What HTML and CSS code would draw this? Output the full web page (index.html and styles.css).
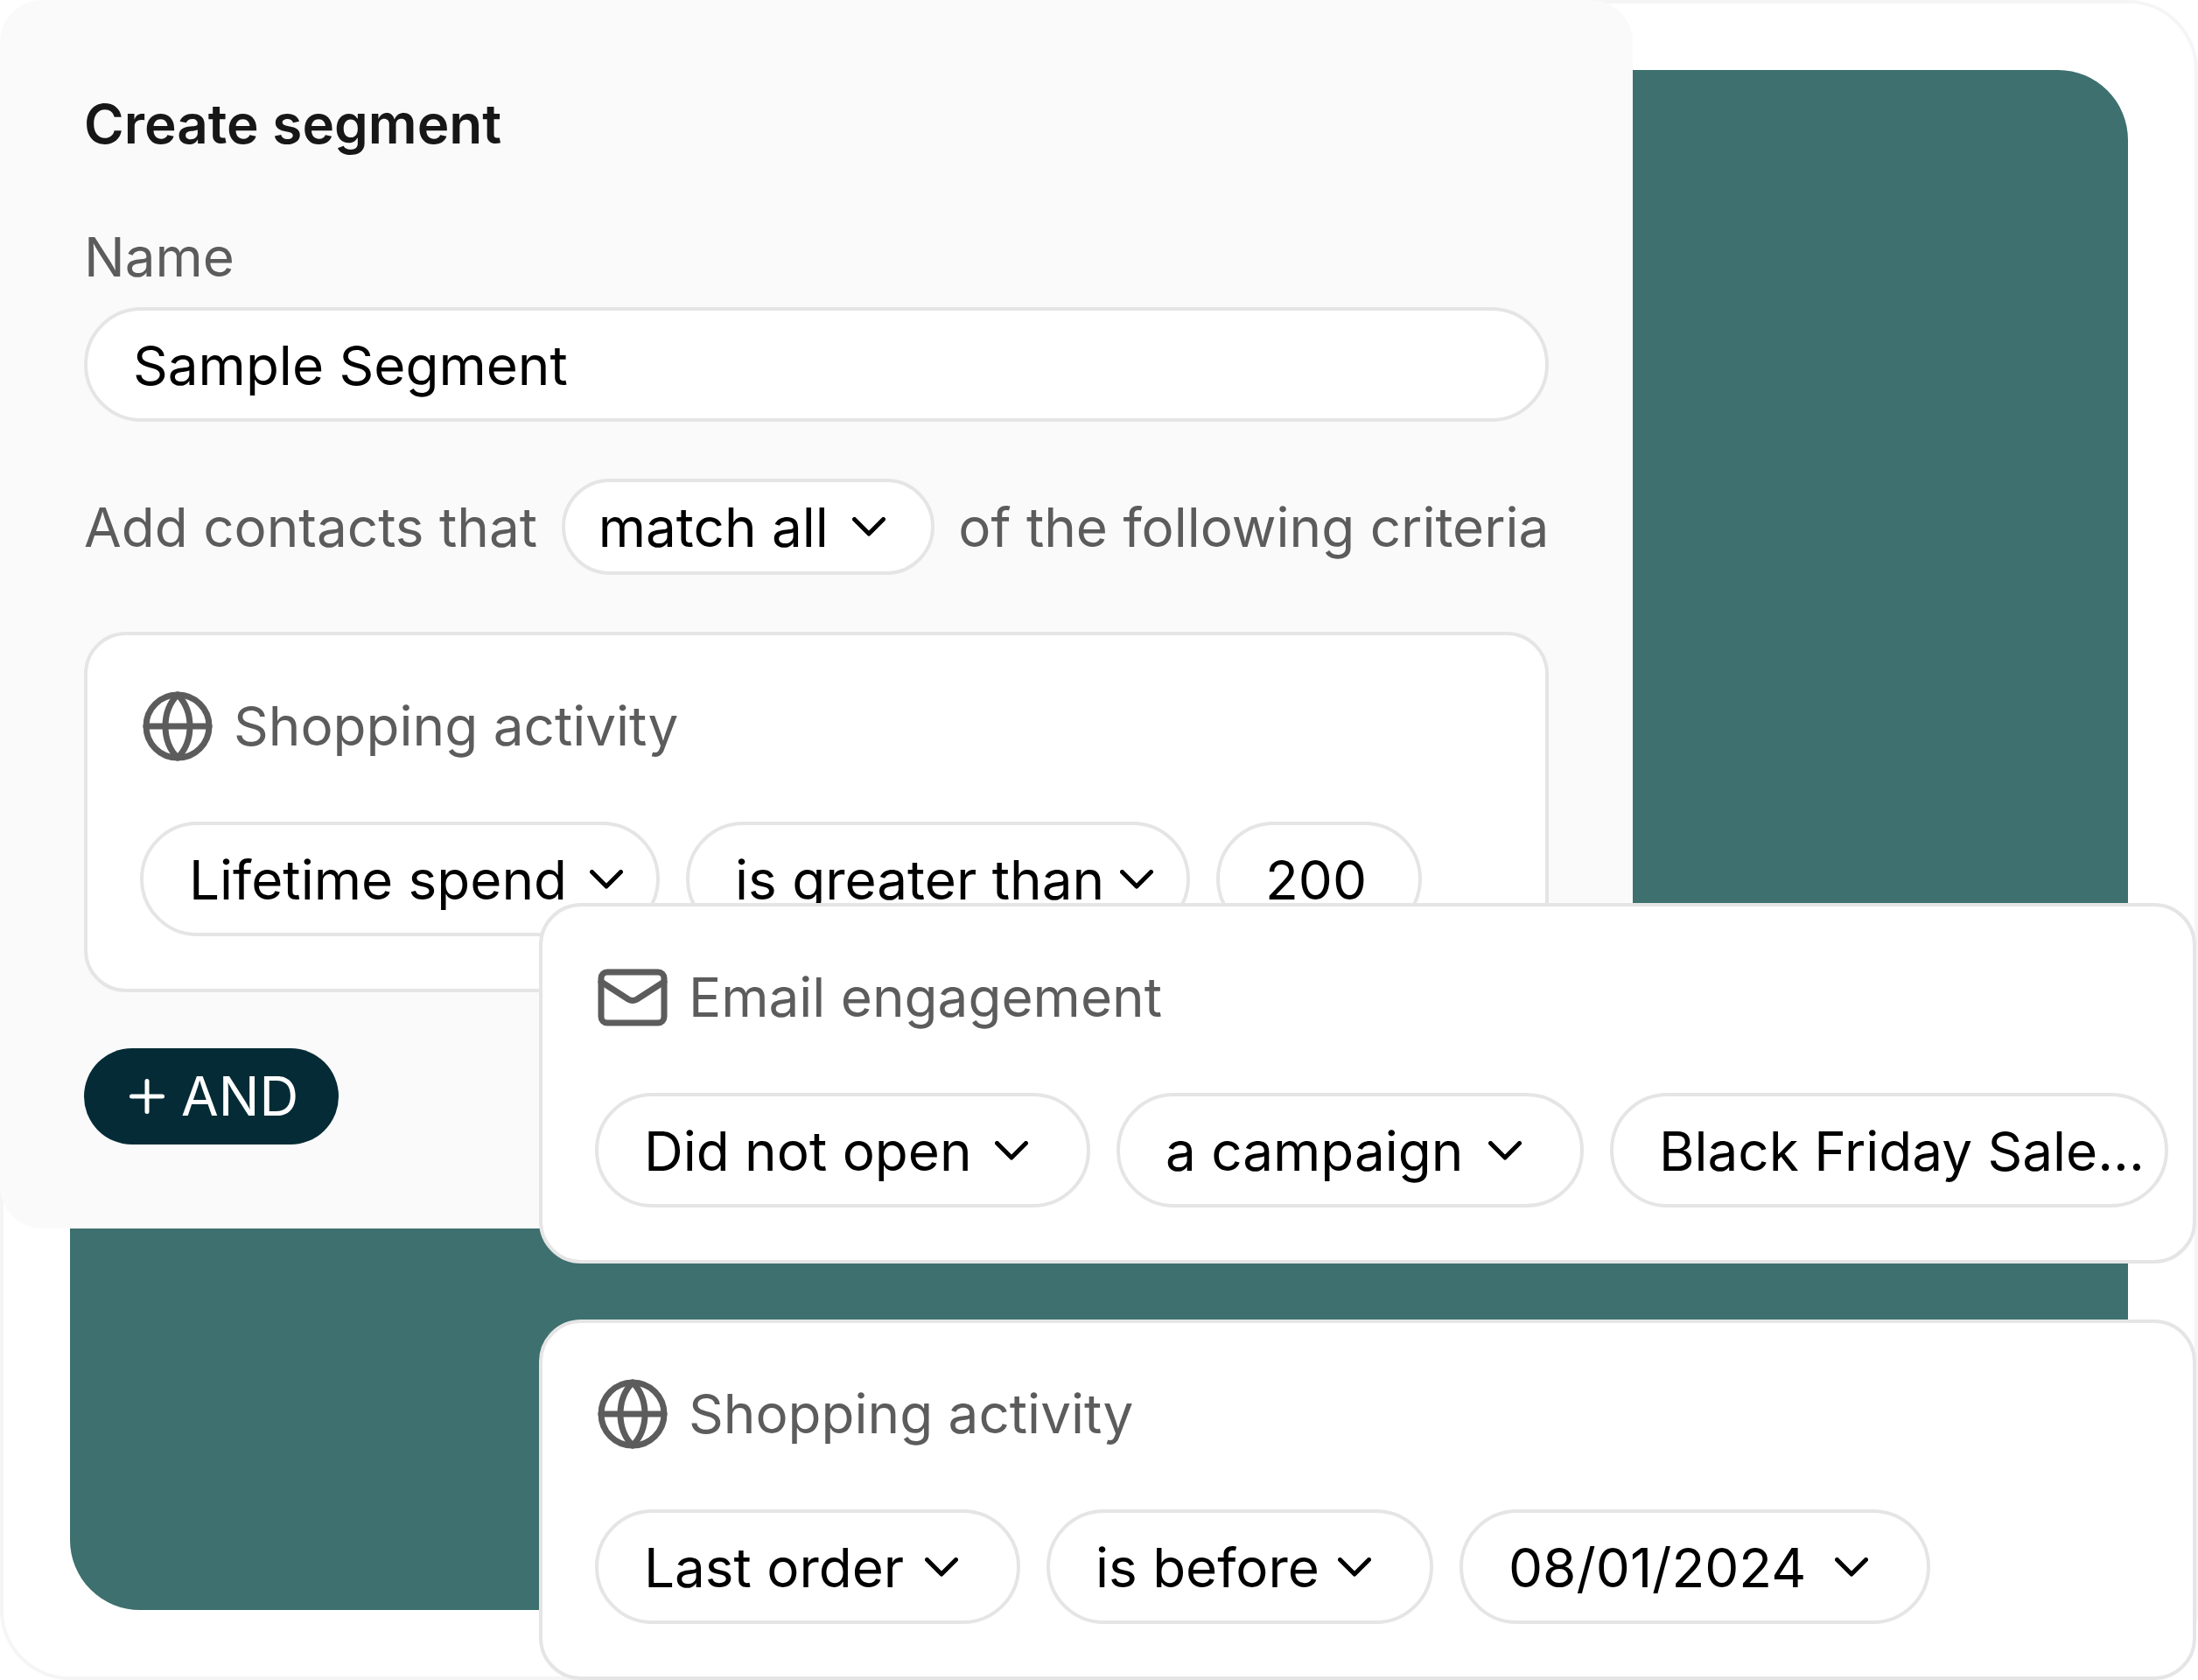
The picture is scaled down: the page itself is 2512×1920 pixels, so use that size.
FILE: index.html
```html
<!DOCTYPE html>
<html lang="en">
<head>
  <meta charset="utf-8">
  <meta name="viewport" content="width=device-width, initial-scale=1">
  <title>Create segment</title>
  <link rel="stylesheet" href="styles.css">
</head>
<body>
  <svg class="sprite" aria-hidden="true">
    <symbol id="icon-globe" viewBox="0 0 86 86">
      <circle cx="43" cy="43" r="36"/>
      <path d="M7 43h72"/>
      <path d="M43 7c-9 9-14 22-14 36s5 27 14 36c9-9 14-22 14-36s-5-27-14-36z"/>
    </symbol>
    <symbol id="icon-mail" viewBox="0 0 86 86">
      <rect x="7" y="14" width="72" height="58" rx="7"/>
      <path d="M7 25l31 20q5 3 10 0l31-20"/>
    </symbol>
    <symbol id="icon-chevron" viewBox="0 0 38 22">
      <path d="M2.5 2.5L19 19L35.500 2.5"/>
    </symbol>
    <symbol id="icon-plus" viewBox="0 0 40 40">
      <path d="M20 2.500v35M2.500 20h35"/>
    </symbol>
  </svg>

  <main class="stage">
    <div class="backdrop"></div>

    <form class="panel">
      <h1 class="panel-title">Create segment</h1>

      <label class="field-label" for="segment-name">Name</label>
      <input class="field" id="segment-name" type="text" value="Sample Segment">

      <div class="match-row">
        <label class="match-text" for="match-mode">Add contacts that</label>
        <span class="picker picker-small">
          <select id="match-mode"><option>match all</option></select>
          <svg class="chevron" aria-hidden="true"><use href="#icon-chevron"/></svg>
        </span>
        <span class="match-text">of the following criteria</span>
      </div>

      <section class="card">
        <h2 class="card-title"><svg class="icon" aria-hidden="true"><use href="#icon-globe"/></svg>Shopping activity</h2>
        <div class="rules rules-spend">
          <span class="picker picker-tight">
            <select aria-label="Metric"><option>Lifetime spend</option></select>
            <svg class="chevron" aria-hidden="true"><use href="#icon-chevron"/></svg>
          </span>
          <span class="picker picker-tight">
            <select aria-label="Comparison"><option>is greater than</option></select>
            <svg class="chevron" aria-hidden="true"><use href="#icon-chevron"/></svg>
          </span>
          <input class="field" type="text" aria-label="Amount" value="200">
        </div>
      </section>

      <button class="add" type="button"><svg class="plus" aria-hidden="true"><use href="#icon-plus"/></svg>AND</button>
    </form>

    <div class="floating">
      <section class="card">
        <h2 class="card-title"><svg class="icon" aria-hidden="true"><use href="#icon-mail"/></svg>Email engagement</h2>
        <div class="rules rules-email">
          <span class="picker">
            <select aria-label="Engagement"><option>Did not open</option></select>
            <svg class="chevron" aria-hidden="true"><use href="#icon-chevron"/></svg>
          </span>
          <span class="picker">
            <select aria-label="Message type"><option>a campaign</option></select>
            <svg class="chevron" aria-hidden="true"><use href="#icon-chevron"/></svg>
          </span>
          <input class="field" type="text" aria-label="Campaign" value="Black Friday Sale...">
        </div>
      </section>

      <section class="card">
        <h2 class="card-title"><svg class="icon" aria-hidden="true"><use href="#icon-globe"/></svg>Shopping activity</h2>
        <div class="rules rules-order">
          <span class="picker">
            <select aria-label="Event"><option>Last order</option></select>
            <svg class="chevron" aria-hidden="true"><use href="#icon-chevron"/></svg>
          </span>
          <span class="picker">
            <select aria-label="Timing"><option>is before</option></select>
            <svg class="chevron" aria-hidden="true"><use href="#icon-chevron"/></svg>
          </span>
          <span class="picker">
            <select aria-label="Date"><option>08/01/2024</option></select>
            <svg class="chevron" aria-hidden="true"><use href="#icon-chevron"/></svg>
          </span>
        </div>
      </section>
    </div>
  </main>
</body>
</html>
```
FILE: styles.css
```css
:root {
  --line: #e5e5e5;
  --muted: #5c5c5c;
  --teal: #3d706e;
  --navy: #052c36;
}

* {
  box-sizing: border-box;
}

body {
  margin: 0;
  background: #fff;
  color: #000;
  font: 400 62px/88px Inter, "Liberation Sans", sans-serif;
}

.sprite {
  position: absolute;
  width: 0;
  height: 0;
}

svg {
  fill: none;
  stroke: currentColor;
  stroke-width: 5px;
  stroke-linecap: round;
  stroke-linejoin: round;
}

.stage {
  position: relative;
  display: flex;
  flex-direction: column;
  min-height: 100vh;
}

.stage::before {
  content: "";
  position: absolute;
  inset: 0;
  border: 4px solid #f5f5f5;
  border-radius: 80px;
}

/* Coloured sheet behind the panel and the floating cards */
.backdrop {
  position: absolute;
  inset: 80px;
  border-radius: 80px;
  background: var(--teal);
}

.panel {
  position: relative;
  display: flex;
  flex-direction: column;
  align-items: stretch;
  width: 74.3%;
  padding: 98px 96px 96px;
  border-radius: 48px;
  background: #fafafa;
}

.panel-title {
  margin: 0 0 64px;
  color: #171717;
  font-size: 62px;
  font-weight: 600;
}

.field-label {
  margin-bottom: 13px;
  color: var(--muted);
}

.field,
.picker select {
  width: 100%;
  min-width: 0;
  height: 131px;
  margin: 0;
  padding: 2px 20px 0 52px;
  border: 4px solid var(--line);
  border-radius: 66px;
  background: #fff;
  color: #000;
  font: inherit;
  appearance: none;
}

.picker {
  display: grid;
  align-items: center;
}

.picker select,
.picker .chevron {
  grid-area: 1 / 1;
}

.chevron {
  width: 38px;
  height: 22px;
  margin-right: 71px;
  justify-self: end;
  color: #000;
  pointer-events: none;
}

.picker-tight .chevron {
  margin-right: 42px;
}

.picker-small select {
  height: 110px;
  padding: 2px 116px 0 38px;
}

.picker-small .chevron {
  margin-right: 56px;
}

.match-row {
  display: flex;
  justify-content: space-between;
  align-items: center;
  margin: 65px 0;
  color: var(--muted);
}

.match-text {
  padding-top: 2px;
}

.card {
  padding: 60px;
  border: 4px solid var(--line);
  border-radius: 48px;
  background: #fff;
}

.card-title {
  display: flex;
  align-items: center;
  gap: 21px;
  margin: 0 0 65px;
  color: var(--muted);
  font-size: 62px;
  font-weight: 400;
}

.icon {
  width: 86px;
  height: 86px;
  stroke-width: 7px;
}

.rules {
  display: grid;
  gap: 30px;
}

.rules-spend {
  grid-template-columns: 594px 576px 235px;
}

.rules-email {
  grid-template-columns: 566px 534px 638px;
}

.rules-order {
  grid-template-columns: 486px 442px 538px;
}

.add {
  display: flex;
  align-items: center;
  align-self: flex-start;
  gap: 19px;
  height: 110px;
  margin: 64px 0 0;
  padding: 0 46px 0 52px;
  border: 0;
  border-radius: 55px;
  background: var(--navy);
  color: #fff;
  font: inherit;
}

.plus {
  width: 40px;
  height: 40px;
}

/* Cards that overlap the lower edge of the panel */
.floating {
  position: relative;
  display: flex;
  flex-direction: column;
  gap: 64px;
  align-self: flex-end;
  width: 75.4%;
  margin: -372px 2px 0 0;
}
```
